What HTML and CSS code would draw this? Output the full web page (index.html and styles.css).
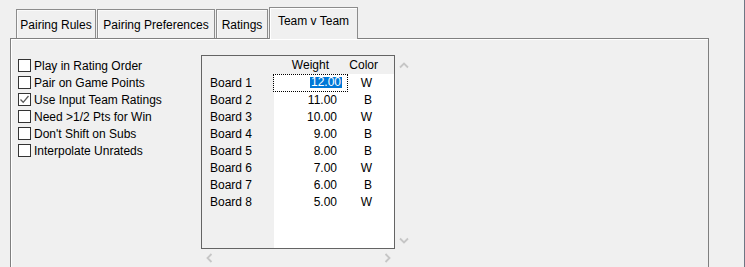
FILE: index.html
```html
<!DOCTYPE html>
<html>
<head>
<meta charset="utf-8">
<link rel="stylesheet" href="styles.css">
</head>
<body>
<div class="window">
  <div class="tabs">
    <div class="tab t1">Pairing Rules</div>
    <div class="tab t2">Pairing Preferences</div>
    <div class="tab t3">Ratings</div>
    <div class="tab t4 active">Team v Team</div>
  </div>
  <div class="panel">
    <div class="options">
      <label class="opt"><span class="box"></span>Play in Rating Order</label>
      <label class="opt"><span class="box"></span>Pair on Game Points</label>
      <label class="opt"><span class="box"><svg width="11" height="11" viewBox="0 0 11 11"><path d="M1.5 5.5 L4.2 8.3 L9.5 2" fill="none" stroke="#5a5a5a" stroke-width="1.3"/></svg></span>Use Input Team Ratings</label>
      <label class="opt"><span class="box"></span>Need &gt;1/2 Pts for Win</label>
      <label class="opt"><span class="box"></span>Don't Shift on Subs</label>
      <label class="opt"><span class="box"></span>Interpolate Unrateds</label>
    </div>
    <div class="gridwrap">
      <div class="grid">
        <div class="hd corner"></div>
        <div class="hd hw">Weight</div>
        <div class="hd hc">Color</div>

        <div class="lbl">Board 1</div>
        <div class="wt sel"><span class="hl">12.00</span></div>
        <div class="cl">W</div>

        <div class="lbl">Board 2</div>
        <div class="wt">11.00</div>
        <div class="cl">B</div>

        <div class="lbl">Board 3</div>
        <div class="wt">10.00</div>
        <div class="cl">W</div>

        <div class="lbl">Board 4</div>
        <div class="wt">9.00</div>
        <div class="cl">B</div>

        <div class="lbl">Board 5</div>
        <div class="wt">8.00</div>
        <div class="cl">B</div>

        <div class="lbl">Board 6</div>
        <div class="wt">7.00</div>
        <div class="cl">W</div>

        <div class="lbl">Board 7</div>
        <div class="wt">6.00</div>
        <div class="cl">B</div>

        <div class="lbl">Board 8</div>
        <div class="wt">5.00</div>
        <div class="cl">W</div>

        <div class="lbl fill"></div>
        <div class="datafill"></div>
      </div>
      <div class="vbar">
        <svg width="10" height="7" viewBox="0 0 10 7"><path d="M1 5.5 L5 1.5 L9 5.5" fill="none" stroke="#c6c6c6" stroke-width="1.8"/></svg>
        <svg width="10" height="7" viewBox="0 0 10 7"><path d="M1 1.5 L5 5.5 L9 1.5" fill="none" stroke="#c6c6c6" stroke-width="1.8"/></svg>
      </div>
      <div class="hbar">
        <svg width="7" height="10" viewBox="0 0 7 10"><path d="M5.5 1 L1.5 5 L5.5 9" fill="none" stroke="#c6c6c6" stroke-width="1.8"/></svg>
        <svg width="7" height="10" viewBox="0 0 7 10"><path d="M1.5 1 L5.5 5 L1.5 9" fill="none" stroke="#c6c6c6" stroke-width="1.8"/></svg>
      </div>
    </div>
  </div>
</div>
</body>
</html>
```

FILE: styles.css
```css
* { box-sizing: border-box; }
html, body {
  margin: 0;
  padding: 0;
  background: #f0f0f0;
}
body {
  font-family: "Liberation Sans", Arial, sans-serif;
  color: #000;
  width: 745px;
  height: 267px;
  overflow: hidden;
}
.window {
  width: 745px;
  height: 267px;
  border-right: 1px solid #6e7684;
  display: flex;
  flex-direction: column;
}
.tabs {
  display: flex;
  align-items: flex-end;
  gap: 1px;
  padding-left: 16px;
  height: 38px;
  position: relative;
  z-index: 2;
}
.tab {
  height: 29px;
  border: 1px solid #8c8c8c;
  border-bottom: none;
  box-shadow: inset 1px 1px 0 #fafafa;
  background: #f0f0f0;
  font-size: 12px;
  text-align: center;
  padding-top: 8px;
  line-height: 14px;
  white-space: nowrap;
}
.t1 { width: 80px; }
.t2 { width: 118px; }
.t3 { width: 52px; }
.t4 { width: 89px; }
.tab.active {
  height: 32px;
  margin-bottom: -1px;
  padding-top: 6px;
  box-shadow: inset 1px 1px 0 #ffffff;
}
.panel {
  margin-left: 10px;
  width: 699px;
  flex: 1;
  border: 1px solid #7f7f7f;
  border-bottom: none;
  box-shadow: inset 1px 1px 0 #ffffff;
  display: flex;
  padding: 16px 0 0 7px;
}
.options {
  width: 183px;
  margin-top: 2px;
  display: flex;
  flex-direction: column;
}
.opt {
  height: 17px;
  display: flex;
  align-items: center;
  gap: 3px;
  font-size: 12px;
  white-space: nowrap;
}
.box {
  width: 13px;
  height: 13px;
  border: 1px solid #333;
  background: #fff;
  display: flex;
  align-items: center;
  justify-content: center;
  flex: none;
}
.gridwrap {
  display: grid;
  grid-template-columns: 194px 17px;
  grid-template-rows: 194px 17px;
}
.grid {
  border: 1px solid #646464;
  background: #fff;
  display: grid;
  grid-template-columns: 72px 72px 48px;
  grid-template-rows: 18px repeat(8, 17px) 1fr;
  font-size: 12px;
}
.grid > div {
  display: flex;
  align-items: center;
  white-space: nowrap;
}
.hd {
  background: #f0f0f0;
  justify-content: flex-end;
}
.hw { padding-right: 17px; }
.hc { padding-right: 16px; }
.lbl {
  background: #f0f0f0;
  padding-left: 8px;
}
.wt {
  justify-content: flex-end;
  padding-right: 9px;
}
.cl {
  justify-content: flex-end;
  padding-right: 22px;
}
.wt.sel {
  position: relative;
  padding-right: 4px;
}
.wt.sel::after {
  content: "";
  position: absolute;
  left: -1px;
  right: -2px;
  top: 0;
  bottom: -1px;
  border: 1px dotted #000;
}
.hl {
  background: #0078d7;
  color: #fff;
  line-height: 11px;
  padding: 0 1px;
}
.datafill {
  grid-column: 2 / 4;
}
.vbar {
  display: flex;
  flex-direction: column;
  justify-content: space-between;
  align-items: center;
  padding: 7px 0 5px 0;
}
.hbar {
  display: flex;
  justify-content: space-between;
  align-items: center;
  padding: 0 4px 0 5px;
}
```
